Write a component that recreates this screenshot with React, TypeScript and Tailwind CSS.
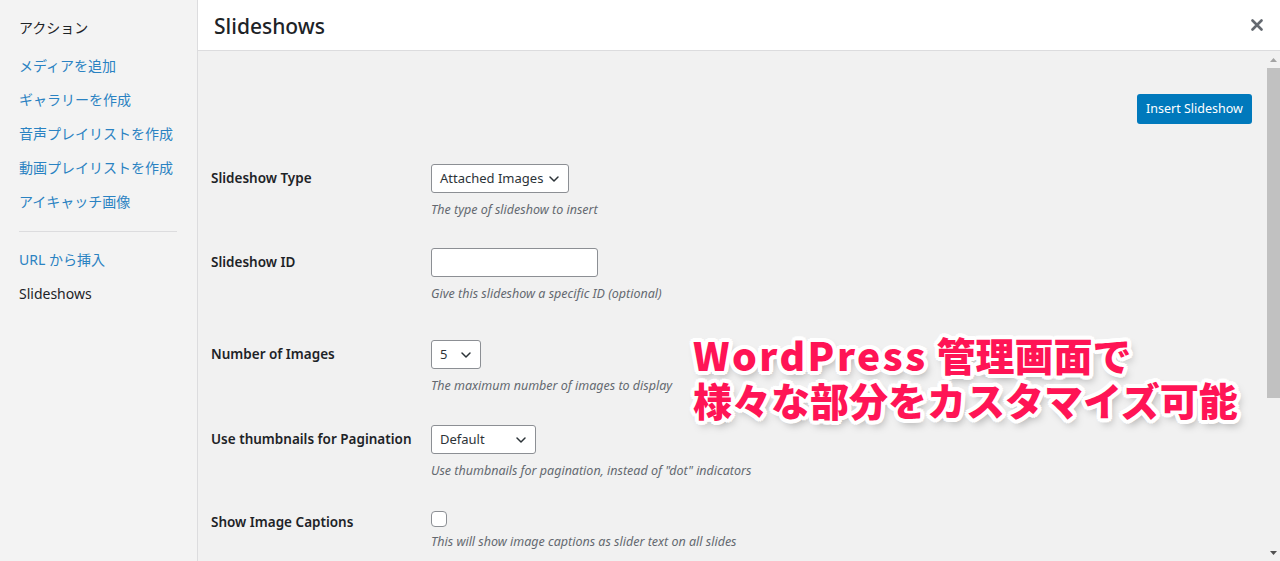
import React from "react";

const FONT = "font-['Noto_Sans','Noto_Sans_CJK_JP',sans-serif]";

const sideLinks = ["メディアを追加", "ギャラリーを作成", "音声プレイリストを作成", "動画プレイリストを作成", "アイキャッチ画像"];

function Chevron() {
  return (
    <svg width="12" height="12" viewBox="0 0 12 12" fill="none">
      <path d="M2 4l4 4 4-4" stroke="#2c3338" strokeWidth="1.5" strokeLinecap="round" strokeLinejoin="round" />
    </svg>
  );
}

function Select({ value, width }: { value: string; width: string }) {
  return (
    <div
      className={`${width} h-[29px] flex items-center justify-between pl-[8px] pr-[8px] bg-white border border-[#8c8f94] rounded-[3px] text-[13px] text-[#2c3338] whitespace-nowrap`}
    >
      <span>{value}</span>
      <Chevron />
    </div>
  );
}

function Desc({ children, className }: { children: React.ReactNode; className?: string }) {
  return (
    <p className={`${className ?? "mt-[9px]"} text-[12.5px] italic text-[#646970] leading-[16px] whitespace-nowrap`}>
      {children}
    </p>
  );
}

function Row({ label, children, className }: { label: string; children: React.ReactNode; className?: string }) {
  return (
    <div className={`flex ${className ?? ""}`}>
      <div className="w-[220px] h-[29px] flex items-center text-[13.5px] font-semibold text-[#1d2327]">{label}</div>
      <div className="flex flex-col">{children}</div>
    </div>
  );
}

export default function App() {
  return (
    <div className={`${FONT} relative w-[1280px] h-[561px] overflow-hidden flex bg-[#f1f1f1]`}>
      {/* Sidebar */}
      <aside className="w-[198px] shrink-0 bg-[#f3f3f3] border-r border-[#dcdcde] pl-[19px] pr-[20px] pt-[17px]">
        <div className="text-[14px] text-[#1d2327] leading-[22px]">アクション</div>
        <ul className="mt-[16px] flex flex-col gap-[12px]">
          {sideLinks.map((l) => (
            <li key={l} className="text-[14px] text-[#2a82c2] leading-[22px]">
              {l}
            </li>
          ))}
        </ul>
        <div className="mt-[18px] h-px bg-[#dcdcde]" />
        <div className="mt-[17px] text-[14px] text-[#2a82c2] leading-[22px]">URL から挿入</div>
        <div className="mt-[12px] text-[14px] text-[#1d2327] leading-[22px]">Slideshows</div>
      </aside>

      {/* Main */}
      <main className="flex-1 flex flex-col">
        <header className="h-[51px] shrink-0 bg-white border-b border-[#dcdcde] flex items-center justify-between pl-[16px] pr-[17px]">
          <h1 className="pt-[3px] text-[21px] font-medium text-[#1d2327]">Slideshows</h1>
          <svg width="12" height="12" viewBox="0 0 12 12">
            <path d="M1.5 1.5l9 9M10.5 1.5l-9 9" stroke="#646970" strokeWidth="2.6" strokeLinecap="round" />
          </svg>
        </header>

        <div className="flex-1 flex">
          <div className="flex-1 pl-[13px] pr-[14px] pt-[43px]">
            <div className="flex justify-end">
              <button className="w-[115px] h-[30px] bg-[#0079bc] text-white text-[12.5px] rounded-[3px] whitespace-nowrap">
                Insert Slideshow
              </button>
            </div>

            <div className="mt-[40px] flex flex-col">
              <Row label="Slideshow Type">
                <Select value="Attached Images" width="w-[138px]" />
                <Desc>The type of slideshow to insert</Desc>
              </Row>

              <Row label="Slideshow ID" className="mt-[30px]">
                <div className="w-[167px] h-[29px] bg-white border border-[#8c8f94] rounded-[3px]" />
                <Desc>Give this slideshow a specific ID (optional)</Desc>
              </Row>

              <Row label="Number of Images" className="mt-[38px]">
                <Select value="5" width="w-[50px]" />
                <Desc>The maximum number of images to display</Desc>
              </Row>

              <Row label="Use thumbnails for Pagination" className="mt-[31px]">
                <Select value="Default" width="w-[105px]" />
                <Desc>Use thumbnails for pagination, instead of "dot" indicators</Desc>
              </Row>

              <Row label="Show Image Captions" className="mt-[29px]">
                <div className="mt-[3px] w-[16px] h-[16px] bg-white border border-[#8c8f94] rounded-[4px]" />
                <Desc className="mt-[7px]">This will show image captions as slider text on all slides</Desc>
              </Row>
            </div>
          </div>

          {/* Scrollbar */}
          <div className="w-[14px] shrink-0 bg-[#f1f1f1] flex flex-col items-center">
            <div className="h-[17px] flex items-center">
              <svg width="7" height="4" viewBox="0 0 7 4">
                <path d="M0 4L3.5 0 7 4z" fill="#a3a3a3" />
              </svg>
            </div>
            <div className="w-[13px] ml-[1px] h-[330px] bg-[#c1c1c1]" />
            <div className="flex-1" />
            <div className="h-[17px] flex items-center">
              <svg width="7" height="4" viewBox="0 0 7 4">
                <path d="M0 0L3.5 4 7 0z" fill="#505050" />
              </svg>
            </div>
          </div>
        </div>
      </main>

      {/* Overlay caption */}
      <div
        className="absolute left-[693px] top-[332px] font-['Noto_Sans_CJK_JP','Noto_Sans',sans-serif] font-black text-[39px] leading-[45px] text-[#ff1455] whitespace-nowrap [text-shadow:3px_0_0_#fff,-3px_0_0_#fff,0_3px_0_#fff,0_-3px_0_#fff,3px_3px_0_#fff,-3px_-3px_0_#fff,3px_-3px_0_#fff,-3px_3px_0_#fff,4px_1px_0_#fff,-4px_1px_0_#fff,1px_4px_0_#fff,1px_-4px_0_#fff,4px_-1px_0_#fff,-4px_-1px_0_#fff,-1px_4px_0_#fff,-1px_-4px_0_#fff,3px_5px_9px_rgba(0,0,0,0.35)]"
      >
        <div className="h-[45px]">
          <span className="inline-block h-[45px] leading-[45px] tracking-[2.5px]">WordPress</span> 管理画面で
        </div>
        <div className="h-[45px]">様々な部分をカスタマイズ可能</div>
      </div>
    </div>
  );
}
